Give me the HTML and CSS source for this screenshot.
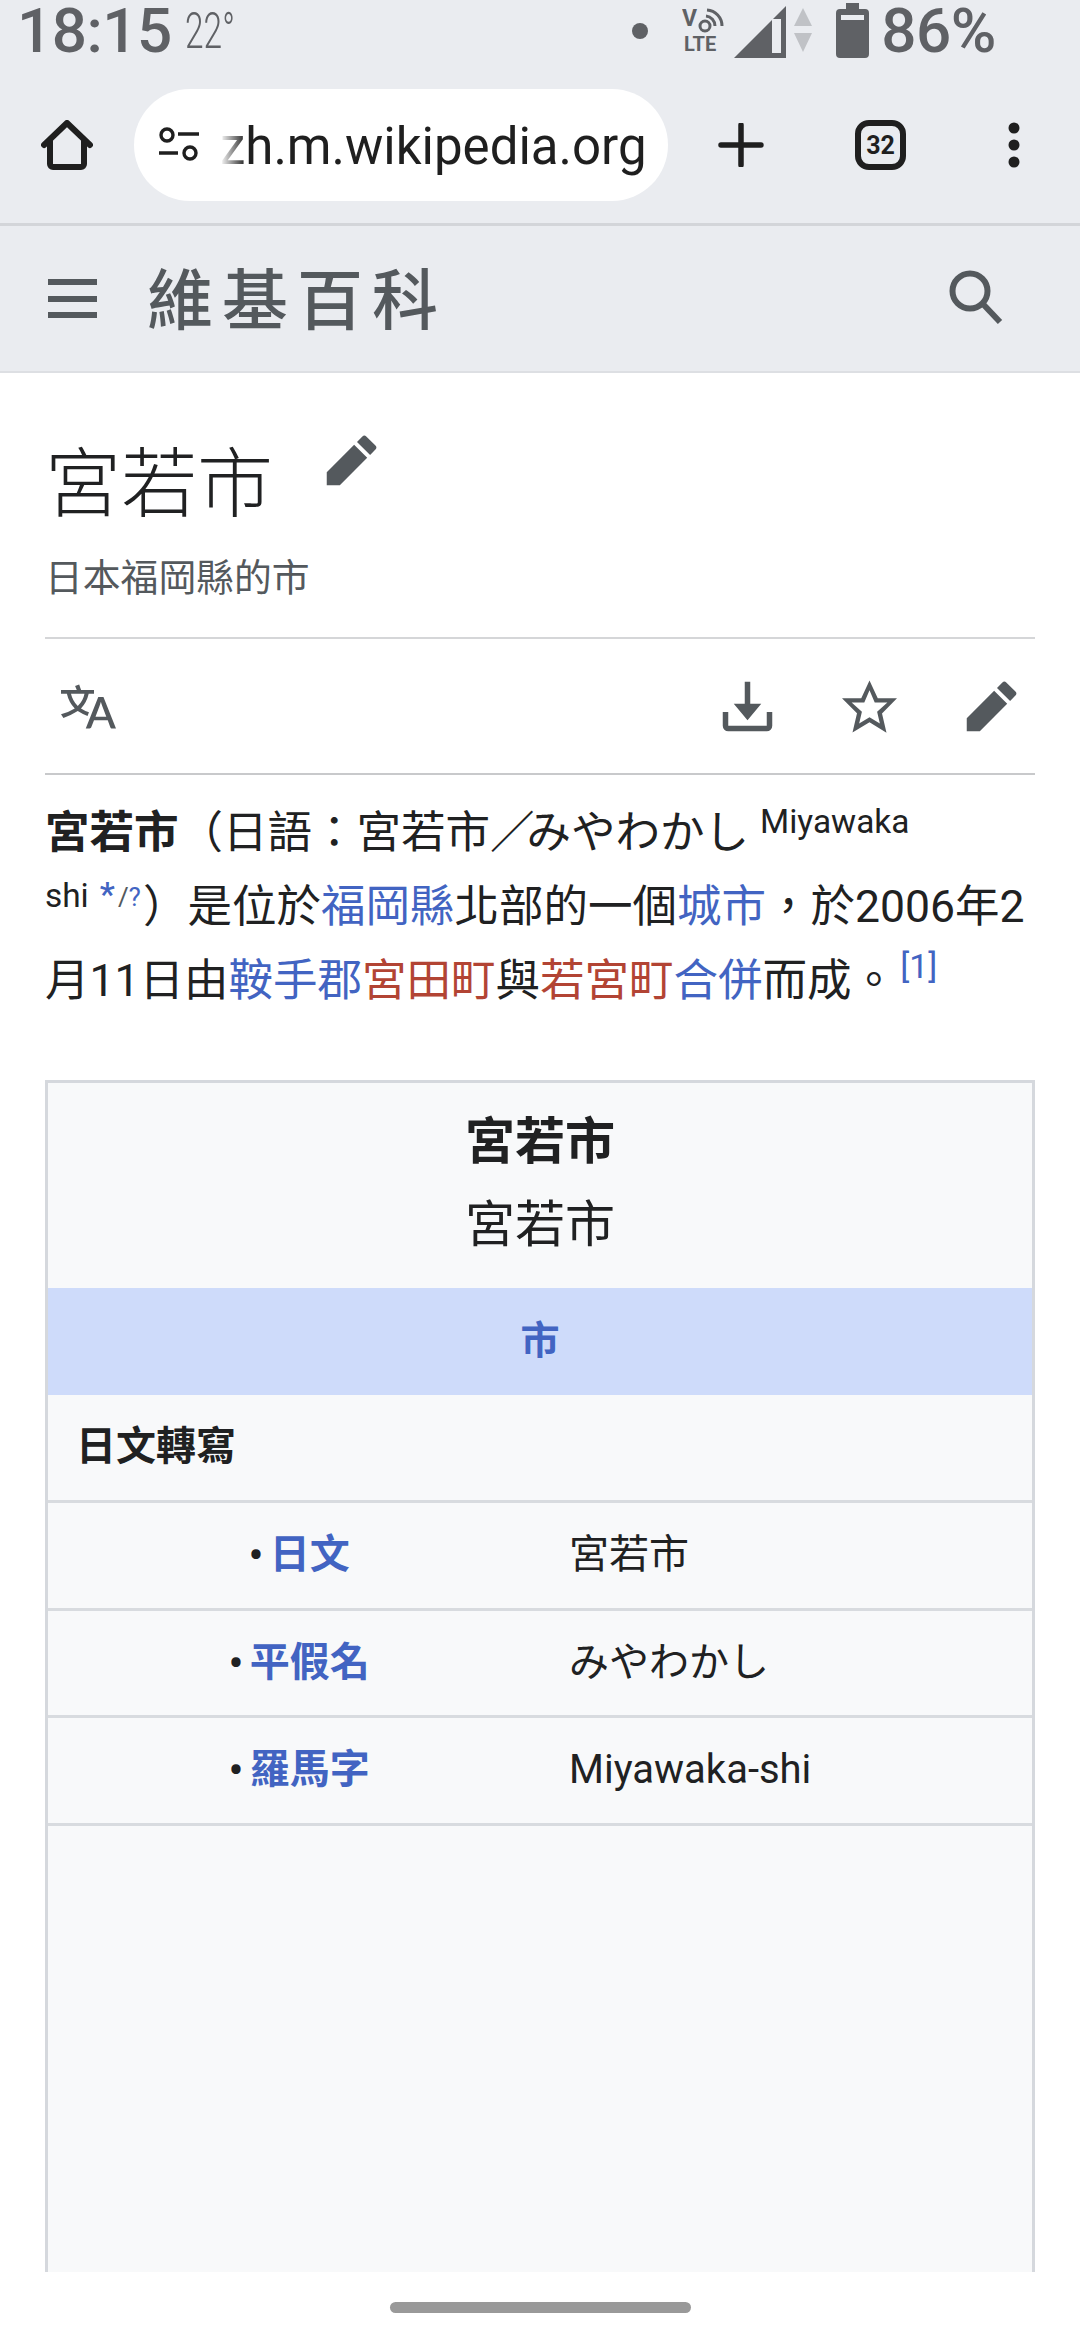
FILE: index.html
```html
<!DOCTYPE html>
<html lang="zh-Hant">
<head>
<meta charset="utf-8">
<title>宮若市</title>
<link rel="stylesheet" href="styles.css">
</head>
<body>
<div class="app">
  <div class="statusbar">
    <span class="time">18:15</span>
    <span class="temp">22°</span>
    <div class="status-right">
      <svg class="st-dot" viewBox="0 0 16 16"><circle cx="8" cy="8" r="8" fill="#5f6165"/></svg>
      <svg class="st-volte" viewBox="0 -10 42 64">
        <text x="0" y="17" class="volte-v">V</text>
        <circle cx="23" cy="17" r="5" fill="none" stroke="#5f6165" stroke-width="3"/>
        <path d="M24 7a10 10 0 0 1 9 10M25 1a16 16 0 0 1 15 16" fill="none" stroke="#5f6165" stroke-width="3"/>
        <text x="2" y="42" class="volte-l">LTE</text>
      </svg>
      <svg class="st-signal" viewBox="0 0 52 52"><path d="M0 52 52 0v52z" fill="#5f6165"/><path d="M38 13h9v34h-9z" fill="#eaecf0"/></svg>
      <svg class="st-arrows" viewBox="0 0 18 44"><path d="M9 0l9 18H0zM0 25h18L9 44z" fill="#c0c2c6"/></svg>
      <svg class="st-batt" viewBox="0 0 33 55"><path d="M10 0h13v6h6a4 4 0 0 1 4 4v41a4 4 0 0 1-4 4H4a4 4 0 0 1-4-4V10a4 4 0 0 1 4-4h6z" fill="#5f6165"/><path d="M5 12h23v5H5z" fill="#eaecf0"/></svg>
      <span class="pct">86%</span>
    </div>
  </div>

  <div class="toolbar">
    <svg class="ic-home" viewBox="0 0 52 50"><path d="M3 25 26 3l23 22M9 20v24a3 3 0 0 0 3 3h28a3 3 0 0 0 3-3V20" fill="none" stroke="#1f1f1f" stroke-width="6" stroke-linecap="round" stroke-linejoin="round"/></svg>
    <div class="omnibox">
      <svg class="ic-tune" viewBox="0 0 42 34"><g fill="none" stroke="#1f1f1f" stroke-width="3.4"><circle cx="9" cy="8" r="6"/><circle cx="32" cy="26" r="6"/><path d="M20 7h21M1 26h19"/></g></svg>
      <span class="url">zh.m.wikipedia.org</span>
    </div>
    <svg class="ic-plus" viewBox="0 0 46 44"><path d="M3 22h40M23 2v40" stroke="#1f1f1f" stroke-width="5.5" stroke-linecap="round"/></svg>
    <div class="tabs">32</div>
    <svg class="ic-more" viewBox="0 0 12 46"><circle cx="6" cy="6" r="5.5"/><circle cx="6" cy="23" r="5.5"/><circle cx="6" cy="40" r="5.5"/></svg>
  </div>

  <header class="wikihead">
    <div class="burger"><i></i><i></i><i></i></div>
    <div class="logo">維基百科</div>
    <svg class="ic-search" viewBox="0 0 54 56"><circle cx="21" cy="21" r="17.5" fill="none" stroke="#54595d" stroke-width="6"/><path d="M33 33l18 19" stroke="#54595d" stroke-width="6"/></svg>
  </header>

  <main class="content">
    <div class="title-row">
      <h1 class="title">宮若市</h1>
      <svg class="ic-action title-edit" viewBox="0 0 20 20"><path d="M16.77 8l1.94-2a1 1 0 0 0 0-1.41l-3.34-3.3a1 1 0 0 0-1.41 0L12 3.23zM1 14.25V19h4.75l9.96-9.96-4.75-4.75z"/></svg>
    </div>
    <p class="tagline">日本福岡縣的市</p>
    <div class="actions">
      <svg class="ic-action" viewBox="0 0 20 20"><path d="M20 18h-1.44a.6.6 0 0 1-.4-.12.8.8 0 0 1-.23-.31L17 15h-5l-1 2.54a.8.8 0 0 1-.22.3.6.6 0 0 1-.4.14H9l4.55-11.47h1.89zm-3.53-4.31L14.89 9.5a12 12 0 0 1-.39-1.24q-.09.37-.19.69l-.19.56-1.58 4.19zm-6.3-1.58a13.4 13.4 0 0 1-2.91-1.41 11.46 11.46 0 0 0 2.81-5.37H12V4H7.31a4 4 0 0 0-.2-.56C6.87 2.79 6.6 2 6.6 2l-1.47.5s.4.89.6 1.5H0v1.33h2.15A11.23 11.23 0 0 0 5 10.7a17.2 17.2 0 0 1-5 2.1q.56.82.87 1.38a23.3 23.3 0 0 0 5.22-2.51 15.6 15.6 0 0 0 3.56 1.77zM3.63 5.33h4.91a8.1 8.1 0 0 1-2.45 4.45 9.1 9.1 0 0 1-2.46-4.45"/></svg>
      <div class="actions-right">
        <svg class="ic-action" viewBox="0 0 20 20"><path d="M17 12v5H3v-5H1v5a2 2 0 0 0 2 2h14a2 2 0 0 0 2-2v-5zM10 15l5-6h-4V1H9v8H5z"/></svg>
        <svg class="ic-action" viewBox="0 0 20 20"><path d="M20 7h-7L10 .5 7 7H0l5.46 5.47-1.64 7 6.18-3.7 6.18 3.73-1.63-7zm-10 6.9-3.76 2.27 1-4.28L3.5 8.5h4.61L10 4.1l1.9 4.4h4.6l-3.73 3.4 1 4.28z"/></svg>
        <svg class="ic-action" viewBox="0 0 20 20"><path d="M16.77 8l1.94-2a1 1 0 0 0 0-1.41l-3.34-3.3a1 1 0 0 0-1.41 0L12 3.23zM1 14.25V19h4.75l9.96-9.96-4.75-4.75z"/></svg>
      </div>
    </div>

    <p class="lead"><b>宮若市</b>（日語：宮若市<span class="slash">／</span>みやわかし <span class="rom">Miyawaka</span><br><span class="rom">shi</span> <span class="ipa"><a class="star">*</a>/<a>?</a></span>）是位於<a>福岡縣</a>北部的一個<a>城市</a>，於2006年2<br>月11日由<a>鞍手郡</a><a class="new">宮田町</a>與<a class="new">若宮町</a><a>合併</a>而成。<a class="ref">[1]</a></p>

    <div class="infobox">
      <div class="ib-head"><div class="ib-name">宮若市</div><div class="ib-alt">宮若市</div></div>
      <div class="ib-type"><a>市</a></div>
      <div class="ib-row ib-section">日文轉寫</div>
      <div class="ib-row"><div class="ib-label"><span class="dot">•</span><a>日文</a></div><div class="ib-value">宮若市</div></div>
      <div class="ib-row"><div class="ib-label"><span class="dot">•</span><a>平假名</a></div><div class="ib-value">みやわかし</div></div>
      <div class="ib-row"><div class="ib-label"><span class="dot">•</span><a>羅馬字</a></div><div class="ib-value">Miyawaka-shi</div></div>
      <div class="ib-rest"></div>
    </div>
  </main>

  <div class="navbar"><div class="gesture"></div></div>
</div>
</body>
</html>
```
FILE: styles.css
```css
* { box-sizing: border-box; }
html, body { margin: 0; padding: 0; background: #fff; }
body { font-family: Roboto, "Noto Sans CJK TC", sans-serif; color: #202122; }
.app { width: 1080px; height: 2340px; display: flex; flex-direction: column; overflow: hidden; }

/* status bar */
.statusbar { height: 78px; flex: none; background: #eaecf0; display: flex; align-items: flex-start; padding: 0 84px 0 17px; color: #5f6165; position: relative; }
.time, .pct { font-size: 62px; font-weight: 500; line-height: 62px; letter-spacing: -.5px; }
.temp { font-size: 50px; font-weight: 300; line-height: 62px; margin-left: 13px; transform: scaleX(.67); transform-origin: left center; }
.status-right { margin-left: auto; display: flex; align-items: flex-start; }
.st-dot { width: 16px; height: 16px; margin-top: 23px; }
.st-volte { width: 42px; height: 64px; margin: -1px 0 0 34px; }
.volte-v { font: 700 23px Roboto, sans-serif; fill: #5f6165; }
.volte-l { font: 700 20px Roboto, sans-serif; fill: #5f6165; }
.st-signal { width: 52px; height: 52px; margin: 6px 0 0 10px; }
.st-arrows { width: 18px; height: 44px; margin: 8px 0 0 8px; }
.st-batt { width: 33px; height: 55px; margin: 3px 0 0 24px; }
.pct { margin-left: 12px; }

/* browser toolbar */
.toolbar { height: 145px; flex: none; background: #eaecf0; padding: 11px 0 22px 41px; display: flex; align-items: center; }
.ic-home { width: 52px; height: 50px; }
.omnibox { width: 534px; height: 112px; margin-left: 41px; background: #fff; border-radius: 56px; display: flex; align-items: center; padding-left: 24px; }
.ic-tune { width: 42px; height: 34px; margin-top: -2px; }
.url { font-size: 51px; line-height: 112px; color: #1f1f1f; margin: 3px 0 0 20px; -webkit-mask-image: linear-gradient(90deg, transparent 0, #000 26px); mask-image: linear-gradient(90deg, transparent 0, #000 26px); }
.ic-plus { width: 46px; height: 44px; margin-left: 50px; }
.tabs { width: 51px; height: 50px; margin-left: 91px; border: 6px solid #1f1f1f; border-radius: 14px; font-size: 25px; font-weight: 700; color: #1f1f1f; display: flex; align-items: center; justify-content: center; }
.ic-more { width: 12px; height: 46px; margin-left: 102px; fill: #1f1f1f; }

/* wiki header */
.wikihead { height: 150px; flex: none; background: #eaecf0; border-top: 3px solid #d3d5d9; border-bottom: 2px solid #dddfe3; display: flex; align-items: center; padding: 0 77px 0 48px; }
.burger { width: 49px; display: flex; flex-direction: column; gap: 10.5px; }
.burger i { display: block; height: 6px; background: #54595d; }
.logo { font-family: "Noto Sans CJK TC", sans-serif; font-size: 66px; font-weight: 500; letter-spacing: 9px; color: #54595d; margin: 0 0 8px 50px; line-height: 72px; }
.ic-search { width: 54px; height: 56px; margin-left: auto; margin-top: -2px; }

/* content */
.content { flex: 1; min-height: 0; overflow: hidden; padding: 0 45px; background: #fff; font-family: Roboto, "Noto Sans CJK TC", sans-serif; }
.title-row { display: flex; align-items: flex-start; margin-top: 60px; height: 100px; }
.title { margin: 0; font-family: "Noto Sans CJK TC", sans-serif; font-size: 76px; font-weight: 300; line-height: 90px; }
.ic-action { width: 55px; height: 55px; fill: #54595d; flex: none; display: block; }
.title-edit { margin-left: 51px; }
.tagline { margin: 17px 0 0; font-family: "Noto Sans CJK TC", sans-serif; font-size: 37.8px; line-height: 50px; color: #54595d; }
.actions { margin-top: 37px; height: 138px; border-top: 2px solid #d5d6d8; border-bottom: 2px solid #c8c9cb; display: flex; align-items: center; justify-content: space-between; padding: 0 16.5px 0 16px; }
.actions-right { display: flex; gap: 67px; }

.lead { margin: 21px 0 0; font-size: 44.5px; line-height: 74px; white-space: nowrap; }
.lead a, .infobox a { color: #4264c2; }
.lead a.new { color: #b24434; }
.lead b { font-weight: 700; }
.slash { letter-spacing: -8px; }
.rom { font-size: 33.4px; line-height: 0; position: relative; top: -15px; }
.ipa { font-size: 26px; line-height: 0; color: #54595d; position: relative; top: -16px; margin-right: 2px; }
.star { font-size: 34px; font-weight: 500; margin-right: 3px; }
.ref { font-size: 34px; line-height: 0; position: relative; top: -18px; margin-left: 4px; }

.infobox { margin-top: 61.5px; border: solid #d5d8dd; border-width: 3px 3px 0; background: #f8f9fa; font-size: 40px; line-height: 50px; }
.ib-head { height: 205px; padding-top: 18px; text-align: center; font-size: 50px; line-height: 83px; }
.ib-name { font-weight: 700; }
.ib-type { height: 107px; background: #cedbfa; font-size: 39px; font-weight: 700; display: flex; align-items: center; justify-content: center; }
.ib-row { height: 107.5px; border-bottom: 3px solid #d8dbdf; display: flex; align-items: center; }
.ib-section { height: 108.5px; font-weight: 700; padding-left: 28px; }
.ib-label { width: 502px; text-align: center; font-weight: 700; }
.ib-label a { color: #4264c2; }
.dot { margin-right: 6px; font-weight: 400; font-size: 46px; line-height: 0; vertical-align: -3px; }
.ib-value { padding-left: 19px; }
.ib-rest { height: 600px; }

/* gesture bar */
.navbar { height: 68px; flex: none; background: #fff; display: flex; justify-content: center; padding-top: 30px; }
.gesture { width: 301px; height: 11px; border-radius: 6px; background: #999; }
```
